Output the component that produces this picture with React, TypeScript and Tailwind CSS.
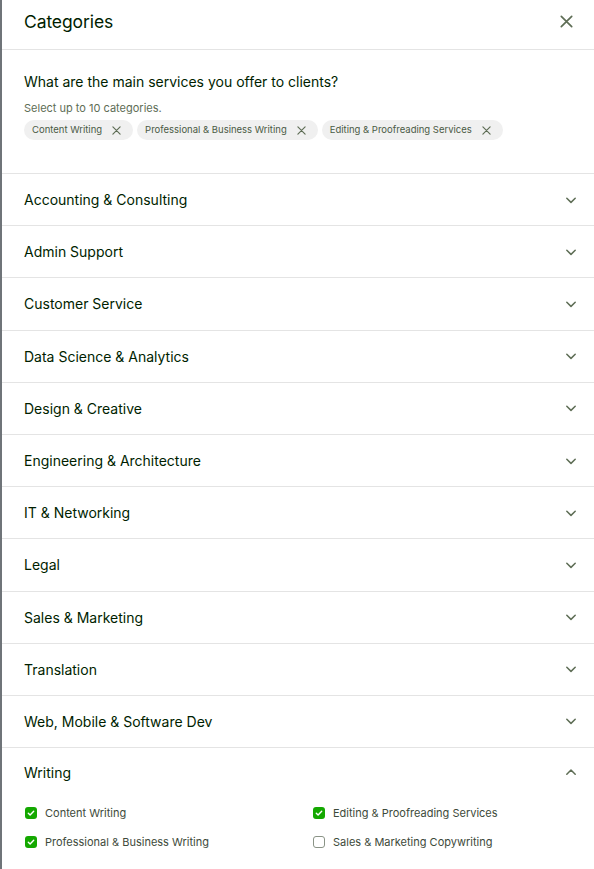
import React, { useState } from 'react';

const CATEGORIES = [
  'Accounting & Consulting',
  'Admin Support',
  'Customer Service',
  'Data Science & Analytics',
  'Design & Creative',
  'Engineering & Architecture',
  'IT & Networking',
  'Legal',
  'Sales & Marketing',
  'Translation',
  'Web, Mobile & Software Dev',
];

const WRITING = [
  'Content Writing',
  'Editing & Proofreading Services',
  'Professional & Business Writing',
  'Sales & Marketing Copywriting',
];

const Chevron = ({ up }: { up?: boolean }) => (
  <svg width="14" height="14" viewBox="0 0 14 14" fill="none" className="text-[#5e6d55]">
    <path
      d={up ? 'M2.8 9.2L7 5l4.2 4.2' : 'M2.8 5.2L7 9.4l4.2-4.2'}
      stroke="currentColor"
      strokeWidth="1.5"
      strokeLinecap="round"
      strokeLinejoin="round"
    />
  </svg>
);

const XIcon = ({ size = 10 }: { size?: number }) => (
  <svg width={size} height={size} viewBox="0 0 10 10" fill="none">
    <path d="M1 1l8 8M9 1L1 9" stroke="currentColor" strokeWidth="1.3" strokeLinecap="round" />
  </svg>
);

const Checkbox = ({ checked }: { checked: boolean }) =>
  checked ? (
    <span className="flex h-[12px] w-[12px] items-center justify-center rounded-[3px] bg-[#14a800]">
      <svg width="8" height="8" viewBox="0 0 8 8" fill="none">
        <path d="M1.3 4.2l1.8 1.8L6.7 2.2" stroke="white" strokeWidth="1.4" strokeLinecap="round" strokeLinejoin="round" />
      </svg>
    </span>
  ) : (
    <span className="h-[12px] w-[12px] rounded-[3px] border border-[#8a9386] bg-white" />
  );

export default function App() {
  const [selected, setSelected] = useState<string[]>([
    'Content Writing',
    'Professional & Business Writing',
    'Editing & Proofreading Services',
  ]);

  const toggle = (s: string) =>
    setSelected(prev => (prev.includes(s) ? prev.filter(x => x !== s) : [...prev, s]));

  return (
    <div
      className="min-h-[869px] w-[594px] border-l-2 border-[#6f7479] bg-white text-[#001e00]"
      style={{ fontFamily: 'Inter, "Liberation Sans", Arial, sans-serif' }}
    >
      {/* Header */}
      <div className="flex h-[50px] items-center justify-between border-b border-[#e4e4e4] pb-[6px] pl-[22px] pr-[16px]">
        <h2 className="text-[17.5px] leading-none tracking-[-0.1px]">Categories</h2>
        <button type="button" className="flex h-6 w-6 items-center justify-center text-[#5e6d55]" aria-label="Close">
          <XIcon size={13} />
        </button>
      </div>

      {/* Intro */}
      <div className="px-[22px] pt-[22px] pb-[33px]">
        <p className="text-[14px] leading-[20px]">What are the main services you offer to clients?</p>
        <p className="mt-[9px] text-[11px] leading-[14px] text-[#5e6d55]">Select up to 10 categories.</p>
        <div className="mt-[5px] flex flex-wrap gap-[4px]">
          {selected.map(s => (
            <span
              key={s}
              className="flex h-[20px] items-center gap-[10px] rounded-full bg-[#f0f0f0] pl-[8px] pr-[12px] text-[9.5px] text-[#4a5a45]"
            >
              {s}
              <button type="button" onClick={() => toggle(s)} className="text-[#5e6d55]" aria-label={`Remove ${s}`}>
                <XIcon size={9} />
              </button>
            </span>
          ))}
        </div>
      </div>

      {/* Category rows */}
      {CATEGORIES.map(c => (
        <div
          key={c}
          className="flex h-[52.2px] items-center justify-between border-t border-[#e4e4e4] pl-[22px] pr-[16px]"
        >
          <span className="text-[14px]">{c}</span>
          <Chevron />
        </div>
      ))}

      {/* Writing expanded */}
      <div className="border-t border-[#e4e4e4] pl-[22px] pr-[16px]">
        <div className="flex h-[48px] items-center justify-between">
          <span className="text-[14px]">Writing</span>
          <Chevron up />
        </div>
        <div className="grid grid-cols-[288px_1fr] gap-y-[17px] pt-[11px] pb-[18px]">
          {WRITING.map(w => (
            <label
              key={w}
              onClick={() => toggle(w)}
              className="flex cursor-pointer items-center gap-[8px] pl-[1px] text-[11px] leading-[12px] text-[#3d4a3a]"
            >
              <Checkbox checked={selected.includes(w)} />
              {w}
            </label>
          ))}
        </div>
      </div>
    </div>
  );
}
